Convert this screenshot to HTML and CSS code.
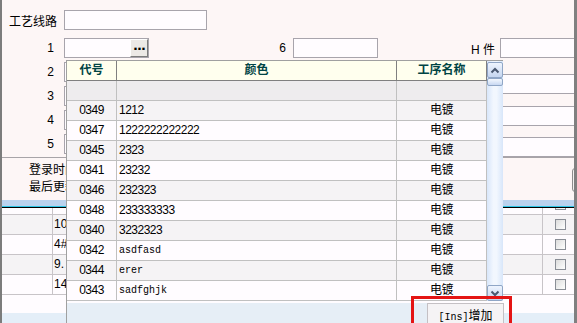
FILE: index.html
```html
<!DOCTYPE html>
<html lang="zh-CN">
<head>
    <meta charset="UTF-8">
    <title>工艺线路</title>
    <link rel="stylesheet" href="styles.css">
</head>
<body>
    <div class="window">
        <div class="form">
            <div class="form-left">
                <div class="row row-top">
                    <label class="lbl">工艺线路</label>
                    <input type="text" class="field field-wide">
                </div>
                <div class="row">
                    <label class="lbl lbl-num">1</label>
                    <div class="picker"><button class="dots">...</button></div>
                    <label class="lbl-mid">6</label>
                    <input type="text" class="field">
                </div>
                <div class="row">
                    <label class="lbl lbl-num">2</label>
                    <input type="text" class="field">
                    <label class="lbl-mid">7</label>
                    <input type="text" class="field">
                </div>
                <div class="row">
                    <label class="lbl lbl-num">3</label>
                    <input type="text" class="field">
                    <label class="lbl-mid">8</label>
                    <input type="text" class="field">
                </div>
                <div class="row">
                    <label class="lbl lbl-num">4</label>
                    <input type="text" class="field">
                    <label class="lbl-mid">9</label>
                    <input type="text" class="field">
                </div>
                <div class="row">
                    <label class="lbl lbl-num">5</label>
                    <input type="text" class="field">
                    <label class="lbl-mid">10</label>
                    <input type="text" class="field">
                </div>
            </div>
            <div class="form-right">
                <div class="row">
                    <label class="lbl-side">H 件</label>
                    <input type="text" class="field field-side">
                </div>
                <input type="text" class="field field-side side-1">
                <input type="text" class="field field-side side-2">
                <input type="text" class="field field-side side-3">
            </div>
        </div>
        <div class="info">
            <div class="stamps">
                <div>登录时间</div>
                <div>最后更新</div>
            </div>
            <button class="save" aria-label="保存"></button>
        </div>
        <div class="grid">
            <div class="grid-head"></div>
            <div class="grid-body">
                <div class="grid-rows">
                    <div class="g-row"><div class="g-no"></div><div class="g-name">17</div><div class="g-check"><span class="box"></span></div></div>
                    <div class="g-row"><div class="g-no"></div><div class="g-name">10</div><div class="g-check"><span class="box"></span></div></div>
                    <div class="g-row"><div class="g-no"></div><div class="g-name">4#</div><div class="g-check"><span class="box"></span></div></div>
                    <div class="g-row"><div class="g-no"></div><div class="g-name">9.</div><div class="g-check"><span class="box"></span></div></div>
                    <div class="g-row"><div class="g-no"></div><div class="g-name">14</div><div class="g-check"><span class="box"></span></div></div>
                </div>
            </div>
            <div class="grid-foot"></div>
        </div>
    </div>

    <div class="dropdown">
        <div class="dd-main">
            <div class="dd-list">
                <div class="dd-row dd-head"><div>代号</div><div>颜色</div><div>工序名称</div></div>
                <div class="dd-row dd-blank"><div></div><div></div><div></div></div>
                <div class="dd-row"><div>0349</div><div>1212</div><div>电镀</div></div>
                <div class="dd-row"><div>0347</div><div>1222222222222</div><div>电镀</div></div>
                <div class="dd-row"><div>0345</div><div>2323</div><div>电镀</div></div>
                <div class="dd-row"><div>0341</div><div>23232</div><div>电镀</div></div>
                <div class="dd-row"><div>0346</div><div>232323</div><div>电镀</div></div>
                <div class="dd-row"><div>0348</div><div>233333333</div><div>电镀</div></div>
                <div class="dd-row"><div>0340</div><div>3232323</div><div>电镀</div></div>
                <div class="dd-row"><div>0342</div><div class="mono">asdfasd</div><div>电镀</div></div>
                <div class="dd-row"><div>0344</div><div class="mono">erer</div><div>电镀</div></div>
                <div class="dd-row"><div>0343</div><div class="mono">sadfghjk</div><div>电镀</div></div>
            </div>
            <div class="scroll">
                <div class="sb-btn">
                    <svg width="10" height="7" viewBox="0 0 10 7"><polyline points="1.5,5.5 5,2 8.5,5.5" fill="none" stroke="#4a5870" stroke-width="2"/></svg>
                </div>
                <div class="sb-thumb"></div>
                <div class="sb-track"></div>
                <div class="sb-btn">
                    <svg width="10" height="7" viewBox="0 0 10 7"><polyline points="1.5,1.5 5,5 8.5,1.5" fill="none" stroke="#4a5870" stroke-width="2"/></svg>
                </div>
            </div>
        </div>
        <div class="dd-foot">
            <button class="add"><span class="key">[Ins]</span>增加</button>
        </div>
    </div>
    <div class="callout"></div>
</body>
</html>
```

FILE: styles.css
```css
body {
    margin: 0;
    font-family: "Liberation Sans", "Noto Sans CJK SC", sans-serif;
    font-size: 12px;
    color: #000;
    background-color: #fdf6f6;
}
.window {
    width: 577px;
    height: 323px;
    box-sizing: border-box;
    border-left: 2px solid #7c7c7c;
    border-right: 3px solid #808080;
    background-color: #fdf6f6;
    overflow: hidden;
}
.form {
    display: flex;
    height: 158px;
    box-sizing: border-box;
    padding-top: 10px;
    border-bottom: 1px solid #a8a4a8;
}
.form-left {
    width: 376px;
    flex-shrink: 0;
}
.form-right {
    display: flex;
    flex-direction: column;
    padding-top: 28px;
}
.row {
    display: flex;
    align-items: center;
    height: 20px;
    margin-bottom: 4px;
}
.row-top {
    margin-bottom: 8px;
}
.lbl {
    width: 55px;
    margin-right: 7px;
    text-align: right;
    box-sizing: border-box;
}
.lbl-num {
    padding-right: 3px;
}
.lbl-mid {
    width: 144px;
    padding-right: 7px;
    box-sizing: border-box;
    text-align: right;
}
.lbl-side {
    width: 117px;
    margin-right: 5px;
    text-align: right;
}
.field {
    width: 85px;
    height: 20px;
    box-sizing: border-box;
    margin: 0;
    padding: 0 2px;
    border: 1px solid #a8a4ac;
    background-color: #fffcff;
    font: inherit;
}
.field-wide {
    width: 143px;
}
.field-side {
    width: 90px;
    flex-shrink: 0;
}
.side-1 {
    margin: 12px 0 0 122px;
}
.side-2 {
    margin: 12px 0 0 122px;
}
.side-3 {
    margin: 11px 0 0 122px;
}
.picker {
    display: flex;
    justify-content: flex-end;
    width: 85px;
    height: 20px;
    box-sizing: border-box;
    border: 1px solid #a8a4ac;
    background-color: #fffcff;
}
.dots {
    width: 18px;
    height: 18px;
    margin: 0;
    padding: 0 0 5px;
    border: 1px solid;
    border-color: #fff #7c7c7c #7c7c7c #fff;
    background-color: #ece9e6;
    font: bold 13px "DejaVu Sans", sans-serif;
    line-height: 10px;
    letter-spacing: -1px;
    color: #000;
}
.info {
    display: flex;
    justify-content: space-between;
    height: 42px;
    box-sizing: border-box;
}
.stamps {
    padding: 4px 0 0 27px;
    line-height: 17px;
}
.save {
    width: 75px;
    height: 24px;
    margin: 10px -73px 0 0;
    border: 1px solid #8c8c8c;
    border-radius: 3px;
    background-color: #f2f0f0;
}
.grid-head {
    height: 6px;
    background-color: #bad2ee;
    border-bottom: 1px solid #2cc4e4;
}
.grid-body {
    height: 105px;
    overflow: hidden;
    border-top: 1px solid #000;
    background-color: #fffcff;
}
.grid-rows {
    margin-top: -13px;
}
.g-row {
    display: flex;
    height: 20px;
    box-sizing: border-box;
    border-bottom: 1px solid #c8c4c8;
}
.g-row:nth-child(even) {
    background-color: #f5f3f5;
}
.g-no {
    width: 51px;
    box-sizing: border-box;
    border-right: 1px solid #c8c4c8;
}
.g-name {
    flex: 1;
    padding-left: 1px;
    line-height: 19px;
}
.g-check {
    width: 32px;
    box-sizing: border-box;
    border-left: 1px solid #c8c4c8;
    padding: 4px 0 0 12px;
}
.box {
    display: block;
    width: 11px;
    height: 11px;
    box-sizing: border-box;
    border: 1px solid #8a8e96;
    background: linear-gradient(135deg, #dcdcdc, #fff);
}
.grid-foot {
    height: 10px;
    background-color: #e4eef8;
}
.dropdown {
    position: absolute;
    left: 66px;
    top: 60px;
    width: 437px;
    box-sizing: border-box;
    border-left: 1px solid #a0a0a0;
    border-top: 1px solid #a0a0a0;
    background-color: #fffcff;
}
.dd-main {
    display: flex;
}
.dd-list {
    width: 420px;
}
.dd-row {
    display: grid;
    grid-template-columns: 50px 280px 90px;
    height: 20px;
    background-color: #fffcff;
}
.dd-row:nth-child(odd) {
    background-color: #f5f3f5;
}
.dd-row div {
    box-sizing: border-box;
    border-right: 1px solid #c0c0c0;
    border-bottom: 1px solid #c0c0c0;
    line-height: 19px;
    letter-spacing: -0.5px;
    white-space: nowrap;
    overflow: hidden;
}
.dd-row div:nth-child(1),
.dd-row div:nth-child(3) {
    text-align: center;
}
.dd-row div:nth-child(2) {
    padding-left: 2px;
}
.dd-row .mono {
    font-family: "Liberation Mono", monospace;
    font-size: 10px;
    letter-spacing: 0;
}
.dd-row.dd-head {
    background-color: #ffffee;
}
.dd-row.dd-head div {
    border-right-color: #808080;
    border-bottom-color: #808080;
    font-weight: bold;
    color: #004444;
    letter-spacing: 0;
    text-align: center;
    padding-left: 0;
}
.dd-row.dd-blank {
    background-color: #eeecee;
}
.scroll {
    display: flex;
    flex-direction: column;
    width: 16px;
    height: 240px;
    background: linear-gradient(to right, #d8e6fa, #f2f7fe 40%, #f2f7fe 60%, #d8e6fa);
}
.sb-btn {
    display: flex;
    align-items: center;
    justify-content: center;
    height: 16px;
    margin: 1px 0 0;
    box-sizing: border-box;
    border: 1px solid #90a6c6;
    border-radius: 2px;
    background: linear-gradient(#eef4fe, #c6d6f0);
}
.sb-thumb {
    height: 8px;
    box-sizing: border-box;
    border: 1px solid #90a6c6;
    border-radius: 2px;
    background: linear-gradient(#f4f8fe, #c8d8f2);
}
.sb-track {
    flex: 1;
}
.dd-foot {
    display: flex;
    justify-content: flex-end;
    height: 26px;
    box-sizing: border-box;
    border-top: 2px solid #fffcff;
    background-color: #e6eef6;
}
.add {
    width: 77px;
    height: 24px;
    margin: 0 -1px 0 0;
    padding: 0 0 2px;
    border: 1px solid #c4c0c4;
    background-color: #f5f3f5;
    font: 12px "Noto Sans CJK SC", sans-serif;
    color: #000;
}
.key {
    font-family: "Liberation Mono", monospace;
    font-size: 10px;
}
.callout {
    position: absolute;
    left: 411px;
    top: 296px;
    width: 101px;
    height: 31px;
    box-sizing: border-box;
    border: 3px solid #e41414;
}
```
